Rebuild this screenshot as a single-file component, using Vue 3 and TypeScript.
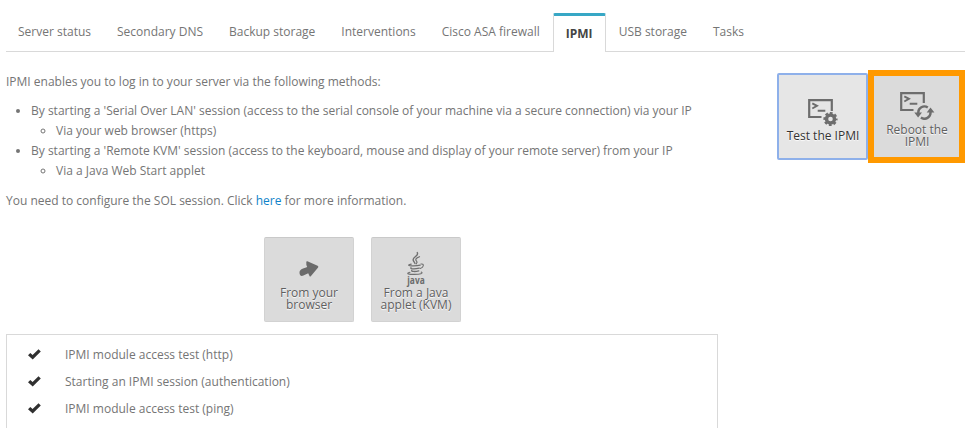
<script setup lang="ts">
interface Tab {
  label: string
  active?: boolean
}

interface Method {
  text: string
  detail: string
}

const tabs: Tab[] = [
  { label: 'Server status' },
  { label: 'Secondary DNS' },
  { label: 'Backup storage' },
  { label: 'Interventions' },
  { label: 'Cisco ASA firewall' },
  { label: 'IPMI', active: true },
  { label: 'USB storage' },
  { label: 'Tasks' },
]

const methods: Method[] = [
  {
    text: "By starting a 'Serial Over LAN' session (access to the serial console of your machine via a secure connection) via your IP",
    detail: 'Via your web browser (https)',
  },
  {
    text: "By starting a 'Remote KVM' session (access to the keyboard, mouse and display of your remote server) from your IP",
    detail: 'Via a Java Web Start applet',
  },
]

const checks: string[] = [
  'IPMI module access test (http)',
  'Starting an IPMI session (authentication)',
  'IPMI module access test (ping)',
]
</script>

<template>
  <div class="page">
    <nav class="tabs">
      <a v-for="tab in tabs" :key="tab.label" class="tab" :class="{ active: tab.active }">{{ tab.label }}</a>
    </nav>

    <main class="content">
      <section class="main">
        <p class="intro">IPMI enables you to log in to your server via the following methods:</p>
        <ul class="methods">
          <li v-for="method in methods" :key="method.detail">
            {{ method.text }}
            <ul>
              <li>{{ method.detail }}</li>
            </ul>
          </li>
        </ul>
        <p class="note">You need to configure the SOL session. Click <a class="link">here</a> for more information.</p>

        <div class="launchers">
          <button class="tile">
            <svg class="icon-arrow" width="20" height="16" viewBox="0 0 20 16">
              <path d="M7.3 1Q7.2 0 8.4 .2L18.6 4.7Q19.8 5.4 19.1 6.4L12 15Q11.1 16 10.5 15L9.2 12.2L4.4 14.6C2.2 15.8 .3 14.4.5 11.3C.7 8.6 3 7.7 8.2 5.9Q7 3.8 7.3 1Z" fill="#6b6b6b" />
            </svg>
            <span>From your<br>browser</span>
          </button>
          <button class="tile">
            <svg class="icon-java" width="20" height="34" viewBox="0 0 20 34">
              <g fill="none" stroke="#707070" stroke-linecap="round">
                <path d="M11.3.6C13.2 4.2 5.7 5.3 7.3 8.4C7.7 9.4 8.5 10.2 9 11.4" stroke-width="1.4" />
                <path d="M13.5 4.7C10 6 8.7 7.5 10.6 9.2C11.5 10.1 11 11 10.2 11.8" stroke-width="1.2" />
                <path d="M5.2 12.2C1.4 13 2 13.6 5 13.8C8 14 12 13.7 14.2 13.1" stroke-width="1.2" />
                <path d="M14.9 12C18.3 11.5 18.2 15 14.3 16.4" stroke-width="1.1" />
                <path d="M5 15.7C3.8 17 8.4 17.3 13.3 16.2M5.8 18.3C5 19.6 9 19.9 12.8 18.9" stroke-width="1.3" />
                <path d="M4 20.3C-1 21.6 3.2 22.5 8.5 22.4C14 22.3 18 21.3 15.2 20.1" stroke-width="1.1" />
              </g>
              <text x="10" y="31.6" class="java-word" text-anchor="middle" textLength="17.4" lengthAdjust="spacingAndGlyphs">java</text>
            </svg>
            <span>From a Java<br>applet (KVM)</span>
          </button>
        </div>

        <ul class="checks">
          <li v-for="check in checks" :key="check">
            <svg width="13" height="12" viewBox="0 0 13 12">
              <path d="M0 6.2L2.3 3.9L4.6 6.1L10.5.2L12.8 2.5L4.7 10.6Z" fill="#303030" />
            </svg>
            <span>{{ check }}</span>
          </li>
        </ul>
      </section>

      <aside class="actions">
        <button class="tile focused">
          <svg width="30" height="28" viewBox="0 0 30 28">
            <g fill="none" stroke="#6d6d6d" stroke-width="2.2">
              <path d="M13.5 18H1.2V1.2H23.8V12" />
              <path d="M4.3 4.3L9 6.8L4.3 9.5M9.7 11.7H17.3" stroke-width="1.9" />
              <circle cx="22.5" cy="20" r="4" stroke-width="3.4" />
              <circle cx="22.5" cy="20" r="6" stroke-width="2.2" stroke-dasharray="2.7 2.012" stroke-dashoffset="1.35" />
            </g>
          </svg>
          <span>Test the IPMI</span>
        </button>
        <div class="highlight">
          <button class="tile">
            <svg width="36" height="28" viewBox="0 0 36 28">
              <g fill="none" stroke="#6d6d6d" stroke-width="2.2">
                <path d="M13.5 18H1.2V1.2H23.8V11" />
                <path d="M4.3 4.3L9 6.8L4.3 9.5M9.7 11.7H17.3" stroke-width="1.9" />
                <path d="M18.3 21A6.1 6.1 0 0 1 27.8 15.5M30.5 20A6.1 6.1 0 0 1 20.9 25.6" stroke-width="2.4" />
              </g>
              <path d="M14.3 20.4H22L18.1 25.4ZM26.7 20.6L30.5 15.6L34.4 20.6Z" fill="#6d6d6d" />
            </svg>
            <span>Reboot the<br>IPMI</span>
          </button>
        </div>
      </aside>
    </main>
  </div>
</template>

<style>
body {
  background: #fff;
  overflow: hidden;
}
</style>

<style scoped>
.page {
  box-sizing: border-box;
  width: 972px;
  height: 428px;
  padding: 13px 7px 0 6px;
  overflow: hidden;
  color: #757575;
  font: 12px/20px "Open Sans", sans-serif;
}

.tabs {
  display: flex;
  box-sizing: border-box;
  height: 39px;
  border-bottom: 1px solid #d9d9d9;
}

.tab {
  box-sizing: border-box;
  height: 39px;
  padding: 9px 13px 0;
  white-space: nowrap;
}

.tab:first-child {
  padding-left: 12px;
}

.tab.active {
  width: 53px;
  padding: 8px 0 0 12px;
  border: 1px solid #d9d9d9;
  border-top: 3px solid #37a7c5;
  border-bottom: 0;
  border-radius: 2px 2px 0 0;
  background: #fff;
  color: #444;
  font-weight: 700;
}

.content {
  display: flex;
  justify-content: space-between;
}

.main {
  width: 712px;
  padding-top: 20px;
}

p {
  margin: 0;
}

ul {
  margin: 0;
  padding: 0;
}

.methods {
  margin: 9px 0 10px 25px;
  white-space: nowrap;
}

.methods ul {
  margin-left: 25px;
}

.link {
  color: #0f83c9;
}

.launchers {
  display: flex;
  justify-content: center;
  gap: 17px;
  margin: 26px 0 12px;
  padding-left: 1px;
}

.tile {
  display: flex;
  box-sizing: border-box;
  width: 90px;
  height: 85px;
  flex-direction: column;
  align-items: center;
  justify-content: flex-end;
  padding: 0 0 10px;
  border: 1px solid #d2d2d2;
  border-top-color: #c9c9c9;
  border-radius: 2px;
  background: #dbdbdb;
  color: #606060;
  font: 12px/12px "Open Sans", sans-serif;
  text-shadow: 0 1px 1px #fff;
  white-space: nowrap;
}

.icon-arrow {
  margin-bottom: 10px;
}

.icon-java {
  margin-bottom: 1px;
  overflow: visible;
}

.java-word {
  fill: #6b6b6b;
  font: 700 10.5px "Open Sans", sans-serif;
  text-shadow: none;
}

.checks {
  display: flex;
  box-sizing: border-box;
  height: 94px;
  flex-direction: column;
  gap: 7px;
  padding: 10px 21px;
  border: 1px solid #d9d9d9;
  border-bottom: 0;
  list-style: none;
}

.checks li {
  display: flex;
  height: 20px;
  flex: none;
  align-items: center;
  gap: 24px;
}

.actions {
  display: flex;
  align-items: flex-start;
  padding-top: 18px;
}

.focused {
  width: 91px;
  height: 87px;
  margin-top: 3px;
  padding: 0 0 16px 1px;
  border: 2px solid #8eb0ea;
  background: #e6e6e6;
  color: #333;
}

.focused svg {
  margin-bottom: 3px;
}

.highlight {
  box-sizing: border-box;
  width: 97px;
  height: 93px;
  border: 6px solid #ff9900;
}

.highlight .tile {
  width: 85px;
  height: 81px;
  padding: 0 0 9px 1px;
  border: 0;
  border-radius: 0;
}

.highlight svg {
  margin: 0 0 4px 2px;
}
</style>
